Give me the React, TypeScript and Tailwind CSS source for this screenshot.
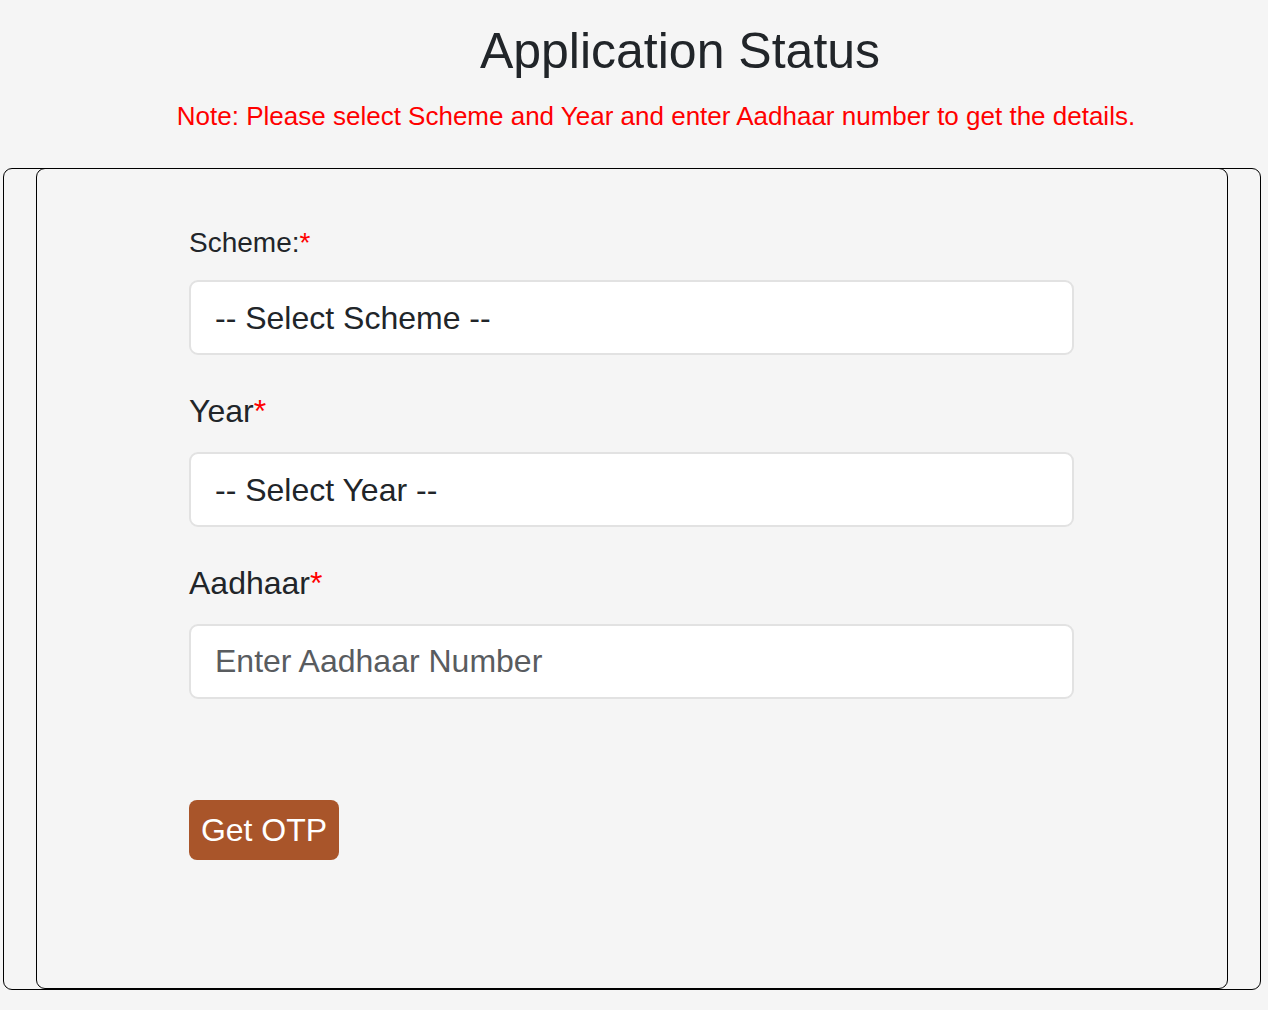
import React from "react";

export default function App() {
  const font = { fontFamily: '"Liberation Sans", Arial, sans-serif' };
  return (
    <div className="min-h-[1010px] w-full bg-[#f5f5f5] text-[#212529]" style={font}>
      <div className="pt-[22px]">
        <h1 className="pl-[92px] text-center text-[50px] leading-[59px] font-normal text-[#212529]">
          Application Status
        </h1>
        <p className="mt-[20px] pl-[44px] text-center text-[26px] leading-[30px] text-[#ff0000]">
          Note: Please select Scheme and Year and enter Aadhaar number to get the details.
        </p>
      </div>
      <div className="mt-[37px] ml-[3px] mr-[7px] rounded-[9px] border border-black">
        <div className="-mt-px mx-[32px] rounded-[9px] border border-black pl-[152px] pt-[58px] pb-[128px]">
          <div className="w-[885px]">
            <label className="block text-[28px] leading-[32px]">
              Scheme:<span className="text-[#ff0000]">*</span>
            </label>
            <div className="mt-[21px] flex h-[75px] items-center rounded-[9px] border-2 border-[#e2e2e2] bg-white pl-[24px] text-[32px] text-[#212529]">
              -- Select Scheme --
            </div>
            <label className="mt-[37px] block text-[32px] leading-[38px]">
              Year<span className="text-[#ff0000]">*</span>
            </label>
            <div className="mt-[22px] flex h-[75px] items-center rounded-[9px] border-2 border-[#e2e2e2] bg-white pl-[24px] text-[32px] text-[#212529]">
              -- Select Year --
            </div>
            <label className="mt-[37px] block text-[32px] leading-[38px]">
              Aadhaar<span className="text-[#ff0000]">*</span>
            </label>
            <input
              className="mt-[22px] block h-[75px] w-full rounded-[9px] border-2 border-[#e2e2e2] bg-white pl-[24px] text-[32px] text-[#212529] outline-none placeholder:text-[#595c5f]"
              placeholder="Enter Aadhaar Number"
              style={font}
            />
            <button
              className="mt-[101px] flex h-[60px] w-[150px] items-center justify-center rounded-[8px] bg-[#a9552a] text-[32px] text-white"
              style={font}
            >
              Get OTP
            </button>
          </div>
        </div>
      </div>
    </div>
  );
}
